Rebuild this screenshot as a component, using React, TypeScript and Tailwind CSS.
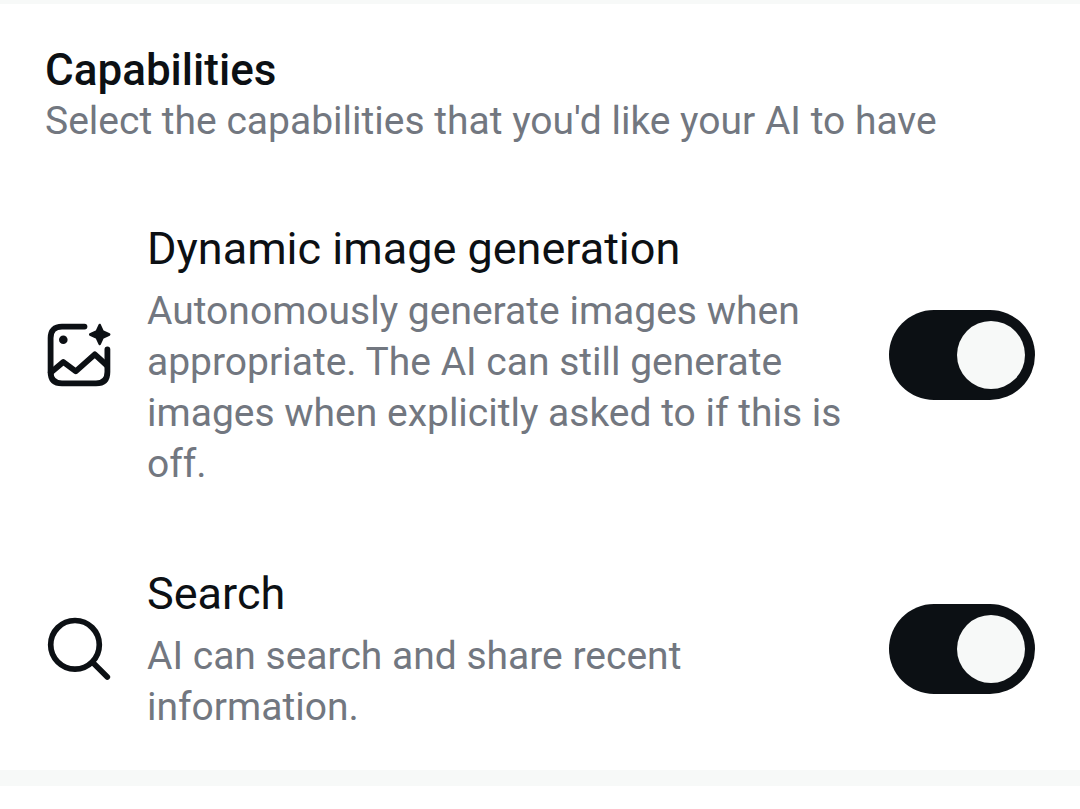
import { useState } from "react";
import type { ReactNode } from "react";

function ImageSparkIcon() {
  return (
    <svg aria-hidden="true" viewBox="0 0 68 68" className="size-[68px] shrink-0" fill="none" stroke="#0c1014" strokeWidth="5.8" strokeLinejoin="round" strokeLinecap="round">
      <path d="M39.500 5.600H17C9.500 5.600 5.600 9.500 5.600 17V51C5.600 58.500 9.500 62.400 17 62.400H51C58.500 62.400 62.400 58.500 62.400 51V28.300" />
      <path d="M5.800 51.500L18.300 41L30.700 50.300L49.800 33.300L62 44.500" />
      <circle cx="18.300" cy="18.800" r="4.300" fill="#0c1014" stroke="none" />
      <path d="M54.700 4L57.700 10.500L64.200 13.500L57.700 16.500L54.700 23L51.700 16.500L45.200 13.500L51.700 10.500Z" fill="#0c1014" strokeWidth="2.5" />
    </svg>
  );
}

function SearchIcon() {
  return (
    <svg aria-hidden="true" viewBox="0 0 68 68" className="size-[68px] shrink-0" fill="none" stroke="#0c1014" strokeWidth="5.7" strokeLinecap="round">
      <circle cx="30" cy="29.800" r="24.300" />
      <path d="M47.500 47.300L62.300 62.100" />
    </svg>
  );
}

function Capability({ id, icon, title, description }: { id: string; icon: ReactNode; title: string; description: string }) {
  const [enabled, setEnabled] = useState(true);
  return (
    <section className="flex items-center">
      {icon}
      <div className="ml-[34px] min-w-0 flex-1 pr-8">
        <h2 id={id} className="text-[45px] leading-[60px] text-[#0c1014]">{title}</h2>
        <p id={`${id}-description`} className="mt-[7px] text-[39px] leading-[51px] text-[#727780]">{description}</p>
      </div>
      <button
        type="button"
        role="switch"
        aria-checked={enabled}
        aria-labelledby={id}
        aria-describedby={`${id}-description`}
        onClick={() => setEnabled(!enabled)}
        className={`flex h-[90px] w-[146px] shrink-0 items-center rounded-full px-2.5 ${enabled ? "justify-end bg-[#0c1014]" : "justify-start bg-[#727780]"}`}
      >
        <span className="size-[68px] rounded-full bg-[#f7f9f8]" />
      </button>
    </section>
  );
}

export default function App() {
  return (
    <main className="min-h-screen bg-white font-['Roboto',sans-serif]">
      <div className="border-t-4 border-b-16 border-[#f7f9f8] px-[45px] pt-[41px] pb-[37px]">
        <header>
          <h1 className="text-[44px] leading-[51px] font-medium text-[#0c1014]">Capabilities</h1>
          <p className="text-[39px] leading-[51px] text-[#727780]">Select the capabilities that you'd like your AI to have</p>
        </header>
        <div className="mt-[72px] flex flex-col gap-[74px]">
          <Capability id="dynamic" icon={<ImageSparkIcon />} title="Dynamic image generation" description="Autonomously generate images when appropriate. The AI can still generate images when explicitly asked to if this is off." />
          <Capability id="search" icon={<SearchIcon />} title="Search" description="AI can search and share recent information." />
        </div>
      </div>
    </main>
  );
}
